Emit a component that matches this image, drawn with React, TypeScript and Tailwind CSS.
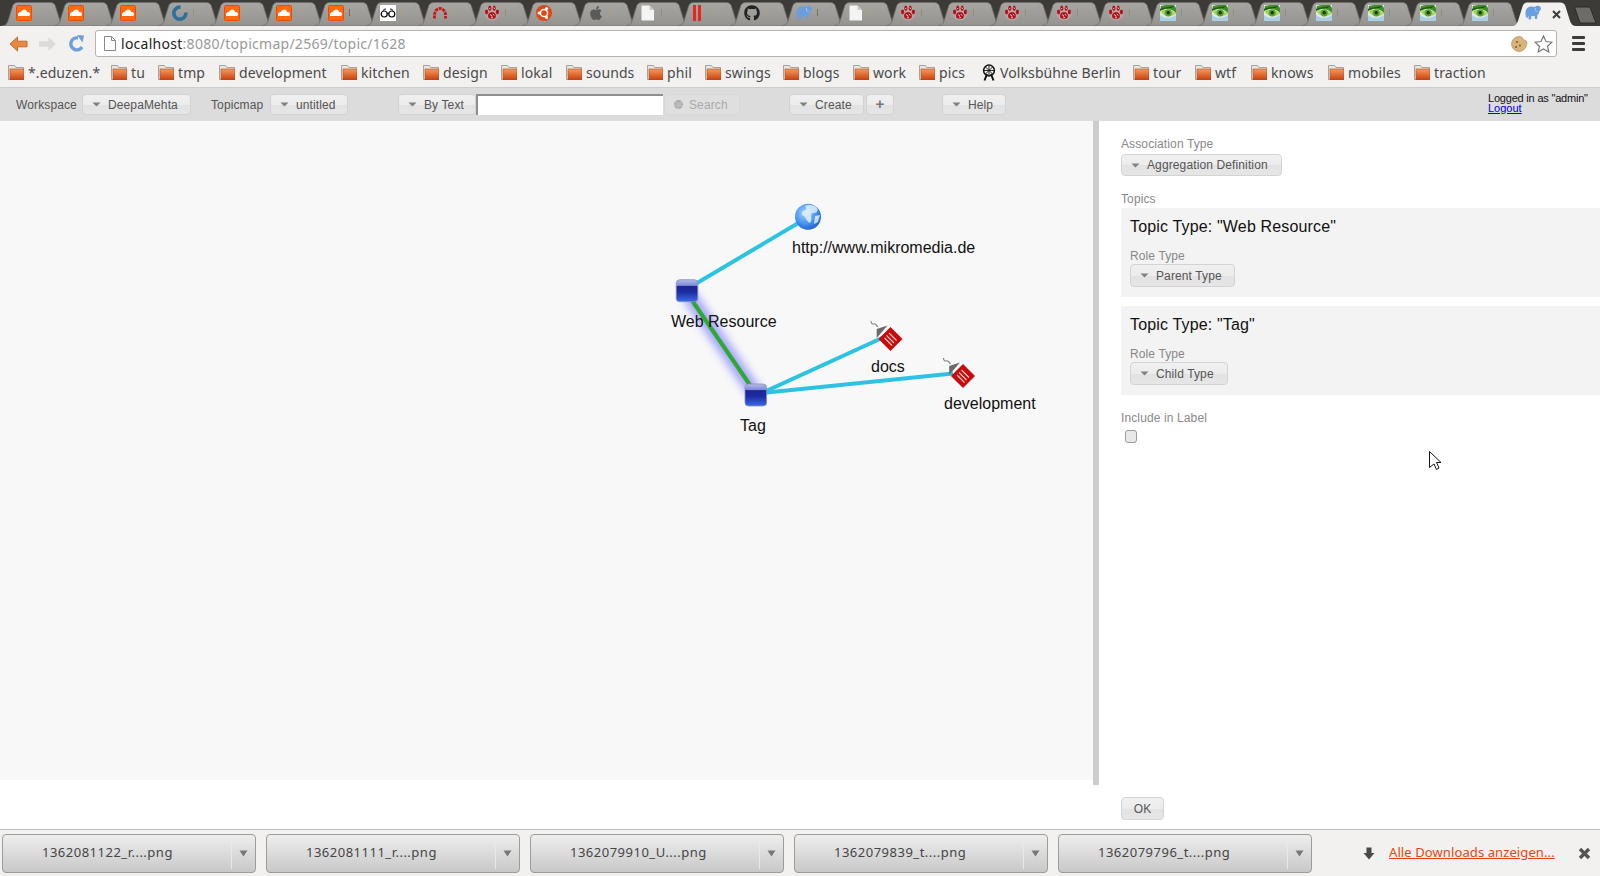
import React from "react";
import { FaApple, FaGithub } from "react-icons/fa";

const Sc = () => (
  <svg width="16" height="16" viewBox="0 0 16 16"><rect x="0.5" y="0.5" width="15" height="15" rx="1" fill="#ff6a10" stroke="#f04a00"/><path d="M2 11 V8.5 L3 7.8 L4 7 L5 6.8 L6 5.5 L8 4.6 C10 4.6 11 6 11 7.2 C12.8 6.6 14.3 8 14 9.5 C13.8 10.6 13 11 12 11 Z" fill="#fff"/></svg>
);
const Ring = () => (
  <svg width="16" height="16" viewBox="0 0 16 16"><path d="M13.8 7.5 A6 6 0 1 1 8.5 2.2" fill="none" stroke="#2f6f9c" strokeWidth="3.6"/></svg>
);
const Glasses = () => (
  <svg width="16" height="16" viewBox="0 0 16 16"><rect width="16" height="16" fill="#fff"/><circle cx="4.2" cy="9" r="3" fill="none" stroke="#000" strokeWidth="1.2"/><circle cx="11.8" cy="9" r="3" fill="none" stroke="#000" strokeWidth="1.2"/><path d="M7 8.4 Q8 7.6 9 8.4 M3 5.5 Q4 4 6 4 M13 5.5 Q12 4 10 4" fill="none" stroke="#000"/></svg>
);
const Arc = () => (
  <svg width="16" height="16" viewBox="0 0 16 16"><path d="M2.5 13.5 V10 A5.5 6.5 0 0 1 13.5 10 V13.5" fill="none" stroke="#c4161c" strokeWidth="2.8" strokeDasharray="3 0.8"/></svg>
);
const Paw = () => (
  <svg width="16" height="16" viewBox="0 0 16 16"><circle cx="8" cy="8" r="7.5" fill="#c9b8b6" opacity="0.45"/><path d="M8 7 C11 7 12.8 10 11.6 12.6 C10.6 14.6 9 13.4 8 13.4 C7 13.4 5.4 14.6 4.4 12.6 C3.2 10 5 7 8 7Z" fill="#b3121d"/><ellipse cx="2.6" cy="7" rx="1.6" ry="2.4" fill="#b3121d"/><ellipse cx="5.8" cy="3.2" rx="1.6" ry="2.6" fill="#b3121d"/><ellipse cx="10.2" cy="3.2" rx="1.6" ry="2.6" fill="#b3121d"/><ellipse cx="13.4" cy="7" rx="1.6" ry="2.4" fill="#b3121d"/><path d="M6 9.5 L8 11 M9 9 L10 10.5 M7 12 L9 12.5 M5.5 3 L6 4 M10 2.5 L10.5 4" stroke="#f3d8d8" strokeWidth="0.9"/></svg>
);
const Ubuntu = () => (
  <svg width="16" height="16" viewBox="0 0 16 16"><circle cx="8" cy="8" r="8" fill="#dd4814"/><circle cx="8" cy="8" r="3.6" fill="none" stroke="#fff" strokeWidth="1.5"/><circle cx="3" cy="8" r="1.5" fill="#fff"/><circle cx="10.6" cy="3.6" r="1.5" fill="#fff"/><circle cx="10.6" cy="12.4" r="1.5" fill="#fff"/></svg>
);
const Doc = () => (
  <svg width="16" height="16" viewBox="0 0 16 16"><path d="M1.5 0.5 H9.5 L14 5 V15.5 H1.5Z" fill="#f4f4f4"/><path d="M9.5 0.5 V5 H14Z" fill="#c9c9c9"/></svg>
);
const Pause = () => (
  <svg width="16" height="16" viewBox="0 0 16 16"><rect x="1" y="0" width="3" height="16" fill="#e8261e"/><rect x="6" y="0" width="3" height="16" fill="#e8261e"/></svg>
);
const Eleph = () => (
  <svg width="17" height="16" viewBox="0 0 17 16"><path d="M1 12 C0 8 0.5 4 3 2.5 C5 1 8 1.4 10 2 C11 0.5 14 0.3 15.3 1.8 C16.6 3.5 15.4 6 14 6.5 C14.2 8 14 9.5 12.5 9.5 L12 14 H10 L9.6 11 H6.5 L6 14.5 H3.6 L3.4 10.5 C2.8 11.5 2.5 12.5 2.6 13.5Z" fill="#6b9ede"/><path d="M10.5 3 C10.3 5 11 6.5 12.5 6.5" fill="none" stroke="#a8c8f0"/></svg>
);
const Eye = () => (
  <svg width="16" height="16" viewBox="0 0 16 16"><rect width="16" height="16" fill="#dcebe2"/><path d="M1 1 L6 0 H14 L16 3 V8 C12 3.5 6 3 0 5.5Z" fill="#3d8f26"/><path d="M0 4 C5 2 10 2 14 1 L12 3 C8 3 4 3.5 0 6Z" fill="#1c5a14"/><path d="M0 6 C4 4 11 4 16 8.5 C11 13 4 12 0 6Z" fill="#a8d26a"/><circle cx="8.2" cy="7.8" r="3.6" fill="#5fa02c"/><circle cx="8.2" cy="7.8" r="1.7" fill="#123a10"/><path d="M0 10 C5 14 11 13.5 16 10 V16 H0Z" fill="#a9d0e4"/></svg>
);
const Gh = () => <FaGithub size={16} color="#222" />;
const Ap = () => <FaApple size={16} color="#5a5a58" />;

const tabs: [React.ReactNode, string][] = [
  [<Sc />, "bg-[#b8a070]"], [<Sc />, "bg-[#b8a070]"], [<Sc />, "bg-[#b8a070]"], [<Ring />, "bg-[#8f8a70]"],
  [<Sc />, "bg-[#b8a070]"], [<Sc />, "bg-[#b8a070]"], [<Sc />, "bg-[#7c4a30]"], [<Glasses />, "bg-[#b8a070]"],
  [<Arc />, "bg-[#b8a070]"], [<Paw />, "bg-[#8a8468] h-[2px]"], [<Ubuntu />, "bg-[#b8a070]"], [<Ap />, "bg-[#b8a070]"],
  [<Doc />, "bg-[#8a8468] h-[3px]"], [<Pause />, "bg-[#b8a070]"], [<Gh />, "bg-[#b8a070]"], [<Eleph />, "bg-[#6e5c3c]"],
  [<Doc />, "bg-[#b8a070]"], [<Paw />, "bg-[#8a8468]"], [<Paw />, "bg-[#8a8468]"], [<Paw />, "bg-[#8a8468]"],
  [<Paw />, "bg-[#8a8468]"], [<Paw />, "bg-[#8a8468]"], [<Eye />, "bg-[#8a8468] h-[2px]"], [<Eye />, "bg-[#8a8468]"],
  [<Eye />, "bg-[#8a8468]"], [<Eye />, "bg-[#8a8468]"], [<Eye />, "bg-[#8a8468]"], [<Eye />, "bg-[#8a8468] h-[2px]"],
  [<Eye />, "bg-[#8a8468] h-[2px]"],
];

const TabShape = ({ active }: { active?: boolean }) => (
  <svg className="absolute left-0 top-0" width="64" height="24" viewBox="0 0 64 24">
    <defs>
      <linearGradient id={active ? "tabA" : "tabI"} x1="0" y1="0" x2="0" y2="1">
        <stop offset="0" stopColor={active ? "#f2f1f0" : "#a7a6a2"} />
        <stop offset="1" stopColor={active ? "#f2f1f0" : "#94938f"} />
      </linearGradient>
    </defs>
    <path d="M0 24 C3 24 5 22 6 19 L10.5 4.5 C11.5 1.5 13 0.5 16 0.5 L48 0.5 C51 0.5 52.5 1.5 53.5 4.5 L58 19 C59 22 61 24 64 24 Z" fill={`url(#${active ? "tabA" : "tabI"})`} stroke={active ? "none" : "#6f6e6a"} strokeWidth="0.8" />
  </svg>
);

const Folder = () => (
  <svg width="16" height="15" viewBox="0 0 16 15" className="shrink-0">
    <defs><linearGradient id="fold" x1="0" y1="0" x2="0" y2="1"><stop offset="0" stopColor="#f59a5c" /><stop offset="1" stopColor="#c9400f" /></linearGradient></defs>
    <path d="M0.5 14.5 V0.5 H6.5 L8 2.5 H15.5 V14.5Z" fill="#e8e6e2" stroke="#a5a39f" />
    <rect x="2" y="4" width="14" height="11" fill="url(#fold)" stroke="#b84a1a" strokeWidth="0.6" />
  </svg>
);

const Wheel = () => (
  <svg width="16" height="17" viewBox="0 0 16 17" className="shrink-0">
    <circle cx="8" cy="6.5" r="5.4" fill="none" stroke="#111" strokeWidth="1.5" />
    <path d="M8 1.5 V11.5 M3 6.5 H13 M4.5 3 L11.5 10 M11.5 3 L4.5 10" stroke="#111" strokeWidth="0.9" />
    <path d="M6 10 L3.5 16.5 M10 10 L12.5 16.5" stroke="#111" strokeWidth="2" />
  </svg>
);

const marks: [string, string][] = [
  ["*.eduzen.*", "w-[103px]"], ["tu", "w-[47px]"], ["tmp", "w-[61px]"], ["development", "w-[122px]"],
  ["kitchen", "w-[82px]"], ["design", "w-[78px]"], ["lokal", "w-[65px]"], ["sounds", "w-[81px]"],
  ["phil", "w-[58px]"], ["swings", "w-[78px]"], ["blogs", "w-[70px]"], ["work", "w-[66px]"], ["pics", "w-[62px]"],
];
const marks2: [string, string][] = [
  ["tour", "w-[62px]"], ["wtf", "w-[56px]"], ["knows", "w-[77px]"], ["mobiles", "w-[86px]"], ["traction", "w-[80px]"],
];

const Mark = ({ label, w }: { label: string; w: string }) => (
  <div className={`flex items-center gap-[4px] shrink-0 ${w}`}>
    <Folder />
    <span>{label}</span>
  </div>
);

const Caret = () => (
  <svg width="9" height="5" viewBox="0 0 9 5" className="shrink-0"><path d="M0.5 0.5 H8.5 L4.5 4.5Z" fill="#808080" /></svg>
);

const UiButton = ({ label, w, h = "h-[21px]", caret = true, extra = "" }: { label: React.ReactNode; w: string; h?: string; caret?: boolean; extra?: string }) => (
  <div className={`flex items-center shrink-0 ${w} ${h} ${extra} rounded-[4px] border border-[#d3d3d3] bg-[linear-gradient(#f0f0f0_0%,#ececec_50%,#e2e2e2_52%,#e6e6e6_100%)] text-[12px] tracking-[0.12px] text-[#555] ${caret ? "pl-[9px] gap-[7px]" : "justify-center"}`}>
    {caret && <Caret />}
    <span>{label}</span>
  </div>
);

const DL = ({ name }: { name: string }) => (
  <div className="flex items-stretch shrink-0 w-[254px] h-[39px] rounded-[4px] border border-[#9c9c98] bg-[linear-gradient(#eeeeee,#c8c8c8)]">
    <div className="flex-1 flex items-center pl-[39px] text-[13px] tracking-[0.5px] text-[#454545]">{name}</div>
    <div className="my-[3px] w-px bg-[#b5b5b2] border-r border-[#e8e8e8]" />
    <div className="w-[23px] pr-[1px] flex items-center justify-center">
      <svg width="9" height="7" viewBox="0 0 9 7"><path d="M0.5 0.5 H8.5 L4.5 6.5Z" fill="#777" /></svg>
    </div>
  </div>
);

const Tag = ({ x, y }: { x: number; y: number }) => (
  <g transform={`translate(${x} ${y})`}>
    <path d="M-19.5 -18 C-19.5 -15.5 -18 -14.5 -16.5 -15.2 C-15 -16 -14.5 -13.5 -12.5 -12.2" fill="none" stroke="#808080" strokeWidth="1.1" />
    <path d="M-13.8 -1 L-13.8 -10 L-3 -13.5Z" fill="#6a6a6a" />
    <path d="M0 -12 L12 0 L0 12 L-12 0Z" fill="#c80a0a" />
    <path d="M-1.5 -6 L6 1.5 M-4 -3.5 L3.5 4 M-6 -1 L1.5 6.5" stroke="#f4d0d0" strokeWidth="1.1" />
  </g>
);

const Node = ({ x, y, id }: { x: number; y: number; id: string }) => (
  <g transform={`translate(${x} ${y})`}>
    <defs>
      <linearGradient id={id} x1="0" y1="0" x2="0" y2="1">
        <stop offset="0" stopColor="#b4bce8" />
        <stop offset="0.26" stopColor="#7f8ad8" />
        <stop offset="0.3" stopColor="#1c2596" />
        <stop offset="0.55" stopColor="#1c2a9e" />
        <stop offset="1" stopColor="#3a6ae8" />
      </linearGradient>
    </defs>
    <rect x="-10.8" y="-11" width="21.6" height="22" rx="3.5" fill={`url(#${id})`} stroke="#8e92b4" strokeWidth="0.8" />
  </g>
);

const Globe = () => (
  <g>
    <defs>
      <radialGradient id="globe" cx="0.4" cy="0.35" r="0.75">
        <stop offset="0" stopColor="#a6d4ff" />
        <stop offset="0.6" stopColor="#3f8ff0" />
        <stop offset="1" stopColor="#1a4fc0" />
      </radialGradient>
    </defs>
    <circle cx="808" cy="216.7" r="13" fill="url(#globe)" />
    <path d="M805 206 C809 204 815 205 817 208 C819 211 816 214 812 213 C810 216 813 219 810 223 C807 222 806 218 804 216 C801 215 801 213 803 211 C806 211 807 208 805 206Z M815 216 L820 215 L818 222 L814 224Z" fill="#e8f2ff" opacity="0.8" />
  </g>
);

const labelBase = "absolute whitespace-nowrap text-[16px] leading-[20px] text-[#111]";

export default function App() {
  return (
    <div className="relative flex flex-col w-full h-[876px] overflow-hidden bg-white font-['Liberation_Sans',sans-serif]">
      {/* tab strip */}
      <div className="relative flex shrink-0 h-[26px] pt-[2px] pl-[2px] bg-[#3c3b37]">
        {tabs.map(([ic, tick], i) => (
          <div key={i} className="relative shrink-0 w-[52px] h-[24px]">
            <TabShape />
            <div className="absolute left-[14px] top-[3px]">{ic}</div>
            <div className={`absolute left-[35px] top-[7px] w-px h-[7px] opacity-70 ${tick}`} />
          </div>
        ))}
        <div className="relative shrink-0 w-[61px] h-[24px] ml-[2px]">
          <TabShape active />
          <div className="absolute left-[13px] top-[3px]"><Eleph /></div>
          <svg className="absolute left-[40px] top-[8px]" width="9" height="9" viewBox="0 0 9 9"><path d="M1 1 L8 8 M8 1 L1 8" stroke="#3c3c3c" strokeWidth="2" /></svg>
        </div>
        <svg className="absolute left-[1574px] top-[6px]" width="24" height="18" viewBox="0 0 24 18"><path d="M0.5 1 H16 L22 17 H6Z" fill="#6d6c68" stroke="#2b2a27" /></svg>
      </div>

      {/* nav bar */}
      <div className="flex items-center shrink-0 h-[35px] bg-[#f2f1f0]">
        <svg className="ml-[9px] shrink-0" width="19" height="16" viewBox="0 0 19 16"><path d="M8.5 1 L1 8 L8.5 15 V10.8 H18 V5.2 H8.5Z" fill="#e58a42" stroke="#c8682a" /></svg>
        <svg className="ml-[10px] shrink-0" width="19" height="16" viewBox="0 0 19 16"><path d="M10.5 1 L18 8 L10.5 15 V10.8 H1 V5.2 H10.5Z" fill="#dcdbd8" /></svg>
        <svg className="ml-[11px] shrink-0" width="17" height="17" viewBox="0 0 17 17"><path d="M14 12 A6 6 0 1 1 10 3" fill="none" stroke="#6f9fd8" strokeWidth="3.4" /><path d="M9 0 L16 0.5 L14.5 7.5Z" fill="#6f9fd8" /></svg>
        <div className="flex items-center ml-[10px] w-[1462px] h-[27px] rounded-[3px] border border-[#b5b3ae] bg-white pl-[8px] pr-[3px] font-['Noto_Sans',sans-serif] text-[14px] tracking-[0.27px]">
          <svg width="12" height="15" viewBox="0 0 12 15" className="shrink-0"><path d="M0.5 0.5 H7.5 L11.5 4.5 V14.5 H0.5Z M7.5 0.5 V4.5 H11.5" fill="#fff" stroke="#888" /></svg>
          <span className="ml-[5px] text-[#222]">localhost</span>
          <span className="text-[#999]">:8080/topicmap/2569/topic/1628</span>
          <div className="flex-1" />
          <svg width="17" height="16" viewBox="0 0 17 16" className="shrink-0"><path d="M8 0.5 C11 0.5 12 2 12 3 C12.5 4.5 14.5 3.5 16 6 C16 11 13 15.5 8 15.5 A7.5 7.5 0 0 1 8 0.5Z" fill="#d9b47a" stroke="#a8864f" strokeWidth="0.6" /><circle cx="6" cy="6" r="1" fill="#7c5a2e" /><circle cx="9" cy="9.5" r="1" fill="#7c5a2e" /><circle cx="5" cy="11" r="1" fill="#7c5a2e" /></svg>
          <svg width="19" height="18" viewBox="0 0 19 18" className="ml-[6px] shrink-0"><path d="M9.5 1 L12 6.5 L18 7.2 L13.5 11.2 L14.8 17 L9.5 14 L4.2 17 L5.5 11.2 L1 7.2 L7 6.5Z" fill="#fff" stroke="#777" strokeWidth="1.2" /></svg>
        </div>
        <div className="ml-[15px] flex flex-col gap-[3px] shrink-0">
          <div className="w-[13px] h-[3px] rounded-[1px] bg-[#3c3c3c]" />
          <div className="w-[13px] h-[3px] rounded-[1px] bg-[#3c3c3c]" />
          <div className="w-[13px] h-[3px] rounded-[1px] bg-[#3c3c3c]" />
        </div>
      </div>

      {/* bookmarks */}
      <div className="flex items-center shrink-0 h-[27px] pl-[8px] pb-[3px] bg-[#f2f1f0] border-b border-[#cfcdc9] font-['Noto_Sans',sans-serif] text-[14px] tracking-[0.1px] text-[#4a4a4a]">
        {marks.map(([l, w]) => <Mark key={l} label={l} w={w} />)}
        <div className="flex items-center gap-[3px] shrink-0 w-[152px]"><Wheel /><span>Volksbühne Berlin</span></div>
        {marks2.map(([l, w]) => <Mark key={l} label={l} w={w} />)}
      </div>

      {/* app toolbar */}
      <div className="flex items-center shrink-0 h-[33px] pl-[16px] bg-[#dcdcdc] text-[12px] tracking-[0.12px] text-[#555]">
        <span className="w-[66px]">Workspace</span>
        <UiButton label="DeepaMehta" w="w-[109px]" />
        <span className="ml-[20px] w-[59px]">Topicmap</span>
        <UiButton label="untitled" w="w-[78px]" />
        <UiButton label="By Text" w="w-[78px]" extra="ml-[50px]" />
        <div className="shrink-0 w-[187px] h-[21px] bg-white border-t-2 border-l-2 border-[#8e8e8e]" />
        <div className="flex items-center shrink-0 ml-[1px] w-[76px] h-[21px] pl-[9px] gap-[6px] rounded-[4px] border border-[#d8d8d8] bg-[#dfdfdf] text-[#aaa]">
          <span className="w-[9px] h-[9px] rounded-full border-2 border-dotted border-[#aaa] bg-[#bbb]" />
          <span>Search</span>
        </div>
        <UiButton label="Create" w="w-[75px]" extra="ml-[49px]" />
        <UiButton label={<span className="text-[15px] font-bold text-[#777]">+</span>} w="w-[28px]" caret={false} extra="ml-[2px]" />
        <UiButton label="Help" w="w-[64px]" extra="ml-[48px]" />
        <div className="ml-auto w-[112px] mb-[4px] flex flex-col text-[11px] leading-[10px] tracking-[-0.2px] text-[#111]">
          <span>Logged in as "admin"</span>
          <span className="tracking-normal text-[#0000ee] underline">Logout</span>
        </div>
      </div>

      {/* main */}
      <div className="relative flex flex-1 min-h-0">
        <div className="relative shrink-0 w-[1093px] h-[659px] bg-[#f8f8f8]">
          <svg className="absolute inset-0" width="1093" height="659" viewBox="0 121 1093 659">
            <defs>
              <filter id="halo" x="-50%" y="-50%" width="200%" height="200%"><feGaussianBlur stdDeviation="4" /></filter>
            </defs>
            <line x1="688" y1="294" x2="755" y2="393" stroke="#6a6aff" strokeWidth="14" filter="url(#halo)" opacity="0.6" />
            <line x1="692" y1="286" x2="800" y2="222" stroke="#2cc3e2" strokeWidth="4" />
            <line x1="689" y1="296" x2="752" y2="388" stroke="#2daa2d" strokeWidth="4" />
            <line x1="762" y1="393" x2="882" y2="338" stroke="#2cc3e2" strokeWidth="4" />
            <line x1="762" y1="393" x2="953" y2="373.5" stroke="#2cc3e2" strokeWidth="4" />
            <Node x={687} y={290.7} id="n1" />
            <Node x={755.8} y={395} id="n2" />
            <Globe />
            <Tag x={890.5} y={339} />
            <Tag x={963} y={376} />
          </svg>
          <span className={`${labelBase} left-[792px] top-[117px]`}>http://www.mikromedia.de</span>
          <span className={`${labelBase} left-[671px] top-[191px]`}>Web Resource</span>
          <span className={`${labelBase} left-[871px] top-[236px]`}>docs</span>
          <span className={`${labelBase} left-[740px] top-[295px]`}>Tag</span>
          <span className={`${labelBase} left-[944px] top-[273px]`}>development</span>
        </div>
        <div className="shrink-0 w-[6px] h-[664px] bg-[#cccccc]" />
        <div className="flex flex-col flex-1 pl-[22px] pt-[16px] pb-[9px] text-[12px] tracking-[0.12px] text-[#888]">
          <div className="leading-[14px]">Association Type</div>
          <UiButton label="Aggregation Definition" w="w-[161px]" h="h-[22px]" extra="mt-[3px]" />
          <div className="mt-[16px] leading-[14px]">Topics</div>
          <div className="mt-[2px] h-[89px] bg-[#f3f3f3] pl-[9px] pt-[9px]">
            <div className="text-[16px] leading-[20px] tracking-[0.16px] text-[#111]">Topic Type: "Web Resource"</div>
            <div className="mt-[12px] leading-[14px]">Role Type</div>
            <UiButton label="Parent Type" w="w-[105px]" h="h-[23px]" extra="mt-[1px]" />
          </div>
          <div className="mt-[9px] h-[89px] bg-[#f3f3f3] pl-[9px] pt-[9px]">
            <div className="text-[16px] leading-[20px] tracking-[0.16px] text-[#111]">Topic Type: "Tag"</div>
            <div className="mt-[12px] leading-[14px]">Role Type</div>
            <UiButton label="Child Type" w="w-[98px]" h="h-[23px]" extra="mt-[1px]" />
          </div>
          <div className="mt-[16px] leading-[14px]">Include in Label</div>
          <div className="ml-[4px] mt-[5px] w-[12px] h-[13px] rounded-[3px] border border-[#9a9a9a] bg-[#e8e8e8]" />
          <div className="flex-1" />
          <UiButton label="OK" w="w-[43px]" h="h-[23px]" caret={false} />
        </div>
        <svg className="absolute left-[1429px] top-[330px]" width="13" height="20" viewBox="0 0 13 20"><path d="M0.5 0.5 L12 11.5 H7.5 L10 17 L7.5 18.5 L5 13 L0.5 16.5Z" fill="#fff" stroke="#111" strokeWidth="1" /></svg>
      </div>

      {/* downloads */}
      <div className="flex items-center shrink-0 h-[47px] pl-[2px] gap-[10px] border-t border-[#c4c2be] bg-[#f2f1f0] font-['Noto_Sans',sans-serif]">
        <DL name="1362081122_r....png" />
        <DL name="1362081111_r....png" />
        <DL name="1362079910_U....png" />
        <DL name="1362079839_t....png" />
        <DL name="1362079796_t....png" />
        <svg className="ml-[41px] shrink-0" width="12" height="13" viewBox="0 0 12 13"><path d="M3.5 0.5 H8.5 V6 H11.5 L6 12.5 L0.5 6 H3.5Z" fill="#4a4a4a" /></svg>
        <span className="ml-[4px] whitespace-nowrap text-[13px] tracking-[0.1px] text-[#e8450f] underline">Alle Downloads anzeigen...</span>
        <svg className="ml-[13px] shrink-0" width="13" height="13" viewBox="0 0 13 13"><path d="M2 2 L11 11 M11 2 L2 11" stroke="#555" strokeWidth="3.4" /></svg>
      </div>
    </div>
  );
}
